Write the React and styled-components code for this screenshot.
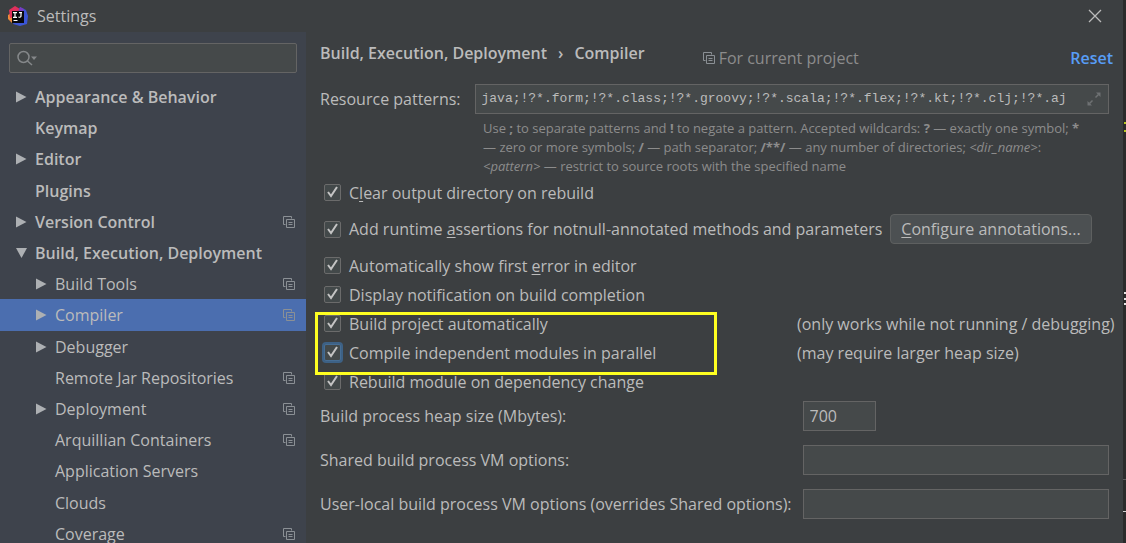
import React from 'react';
import styled, { createGlobalStyle, css } from 'styled-components';

const Global = createGlobalStyle`
  *, *::before, *::after { box-sizing: border-box; }
  html, body, #root { height: 100%; }
  body {
    margin: 0;
    overflow: hidden;
    background: #3c3f41;
    color: #bbbbbb;
    font: 16px/20px "Open Sans", "Noto Sans", sans-serif;
  }
  input, button { font: inherit; color: inherit; }
  u { text-underline-offset: 2px; }
`;

const Screen = styled.div`
  display: flex;
  height: 100%;
`;

const Dialog = styled.div`
  display: flex;
  flex-direction: column;
  flex: 1;
  min-width: 0;
  background: #3c3f41;
`;

const Backdrop = styled.div`
  flex: none;
  width: 3px;
  overflow: hidden;
  background: #2b2b2b;
`;

const TitleBar = styled.header`
  display: flex;
  align-items: center;
  gap: 9px;
  flex: none;
  height: 32px;
  padding: 0 21px 0 8px;
`;

const Title = styled.h1`
  flex: 1;
  margin: 0;
  font-size: 16px;
  font-weight: 400;
`;

const IconButton = styled.button`
  display: flex;
  padding: 0;
  border: 0;
  background: none;
`;

const Body = styled.div`
  display: flex;
  flex: 1;
  min-height: 0;
`;

const Sidebar = styled.nav`
  flex: none;
  width: 306px;
  padding-top: 11px;
  overflow: hidden;
  background: #3e434c;
`;

const SearchBox = styled.label`
  display: flex;
  align-items: center;
  height: 30px;
  margin: 0 9px 8px 9px;
  padding-left: 6px;
  border: 1px solid #646464;
  border-radius: 2px;
  background: #45494a;
`;

const SearchInput = styled.input`
  flex: 1;
  min-width: 0;
  border: 0;
  outline: 0;
  background: transparent;
`;

const Tree = styled.ul`
  display: grid;
  grid-auto-rows: 31px 31px 32px 31px 31px;
  margin: 0;
  padding: 0;
  list-style: none;
`;

const TreeRow = styled.li`
  display: flex;
  align-items: center;
  padding: 0 11px 0 ${(p) => (p.$level ? '35px' : '15px')};
  background: ${(p) => (p.$selected ? '#4b6eaf' : 'transparent')};
  font-weight: ${(p) => (p.$level ? 400 : 600)};
`;

const Arrow = styled.span`
  display: flex;
  flex: none;
  width: 20px;
`;

const TreeLabel = styled.a`
  flex: 1;
  color: inherit;
  text-decoration: none;
  white-space: nowrap;
`;

const Content = styled.main`
  flex: 1;
  min-width: 0;
  padding: 11px 14px 0 14px;
`;

const Header = styled.div`
  display: flex;
  align-items: flex-start;
  height: 41px;
  margin-right: -4px;
  white-space: nowrap;
`;

const Crumbs = styled.h2`
  display: flex;
  gap: 11px;
  margin: 0 58px 0 0;
  font-size: 16px;
  line-height: 20px;
  font-weight: 600;
`;

const Scope = styled.span`
  display: flex;
  align-items: center;
  gap: 4px;
  flex: 1;
  margin-top: 5px;
  color: #8c8c8c;
`;

const Reset = styled.a`
  margin-top: 5px;
  color: #589df6;
  font-weight: 600;
  text-decoration: none;
`;

const PatternRow = styled.div`
  display: flex;
  align-items: center;
  gap: 14px;
`;

const fieldBox = css`
  height: 30px;
  border: 1px solid #646464;
  background: #45494a;
`;

const PatternField = styled.div`
  ${fieldBox}
  display: flex;
  align-items: center;
  flex: 1;
  min-width: 0;
  padding: 0 6px;
`;

const PatternInput = styled.input`
  flex: 1;
  min-width: 0;
  padding: 0;
  border: 0;
  outline: 0;
  background: transparent;
  font: 13px/20px "Liberation Mono", monospace;
`;

const Hint = styled.p`
  margin: 5px 0 2px 163px;
  color: #8c8c8c;
  font-size: 13px;
  line-height: 19px;
  white-space: nowrap;
`;

const Options = styled.div`
  display: flex;
  flex-direction: column;
`;

const OptionRow = styled.div`
  display: flex;
  align-items: center;
  height: ${(p) => (p.$tall ? '44px' : '29px')};
  white-space: nowrap;
`;

const OptionLabel = styled.label`
  display: flex;
  align-items: center;
  gap: 8px;
  padding-left: 4px;
`;

const CheckHolder = styled.span`
  display: grid;
  & > * { grid-area: 1 / 1; }
  & > svg { pointer-events: none; visibility: hidden; }
  & > input:checked + svg { visibility: visible; }
`;

const Check = styled.input`
  appearance: none;
  width: 17px;
  height: 17px;
  margin: 0;
  border: 1px solid ${(p) => (p.$focused ? '#466d94' : '#6b6b6b')};
  border-radius: 2px;
  outline: 0;
  background: #43494a;
  box-shadow: ${(p) => (p.$focused ? '0 0 0 2px #3d6185' : 'none')};
`;

const Note = styled.span`
  flex: none;
  width: 312px;
  margin-left: auto;
`;

const Marked = styled.div`
  position: relative;
  &::after {
    content: '';
    position: absolute;
    inset: 3px auto -8px -5px;
    width: 402px;
    border: 3px solid #ffff21;
    pointer-events: none;
  }
`;

const Button = styled.button`
  height: 30px;
  margin-left: 8px;
  padding: 0 10px;
  border: 1px solid #5e6060;
  border-radius: 4px;
  background: #4c5052;
`;

const Fields = styled.div`
  display: grid;
  grid-template-columns: auto minmax(0, 1fr);
  column-gap: 11px;
  row-gap: 14px;
  align-items: center;
  margin-top: 5px;
  white-space: nowrap;
`;

const Field = styled.input`
  ${fieldBox}
  width: ${(p) => (p.$short ? '73px' : '100%')};
  padding: 0 6px;
  border-radius: 0;
  outline: 0;
`;

const Logo = () => (
  <svg width="20" height="20" viewBox="0 0 20 20" aria-hidden="true">
    <path d="M0 9l5-3 3 10-4 1-4-4z" fill="#f08a3a" />
    <path d="M1 4l6-4 5 3-2 8-8 1z" fill="#e0305c" />
    <path d="M12 1l6 3 2 6-1 8-7 2-7-2 3-6z" fill="#3b55d6" />
    <path d="M12 1l4 2-2 4-4-1z" fill="#7a3bc0" />
    <path d="M4 5h12v12H4z" fill="#08080c" />
    <path d="M5 6.600h4M7 7v4M5 11.400h4M11 6.600h3M13 7v3q0 1.400-2.500 1.200M5.500 14.500h4" fill="none" stroke="#fff" strokeWidth="1.200" />
  </svg>
);

const CopyIcon = () => (
  <svg width="12" height="12" viewBox="0 0 12 12" fill="none" stroke="#8b9095" aria-hidden="true">
    <path d="M2.500 8.500h-2v-8h8v2" />
    <path d="M3.500 3.500h8v8h-8zM5.500 6.500h4M5.500 8.500h4" />
  </svg>
);

const Triangle = ({ open }) => (
  <svg width="12" height="12" viewBox="0 0 12 12" fill="#adb0b3" aria-hidden="true">
    <path d={open ? 'M1 1h11L6.500 11z' : 'M1 0.500v11L11.500 6z'} />
  </svg>
);

const EditorEdge = () => (
  <svg width="3" height="543" viewBox="0 0 3 543" aria-hidden="true">
    <path d="M1 122h2v2H1zM1 130h2v2H1z" fill="#b5c522" />
    <path d="M1 292h2v2H1zM1 298h2v2H1zM1 303h2v2H1z" fill="#e4e4e4" />
    <path d="M0 479h3v1H0z" fill="#5c5c5c" />
    <path d="M0 511h3v1H0z" fill="#d0d0d0" />
  </svg>
);

const tree = [
  ['Appearance & Behavior', 0, 'closed'],
  ['Keymap', 0],
  ['Editor', 0, 'closed'],
  ['Plugins', 0],
  ['Version Control', 0, 'closed', true],
  ['Build, Execution, Deployment', 0, 'open'],
  ['Build Tools', 1, 'closed', true],
  ['Compiler', 1, 'closed', true],
  ['Debugger', 1, 'closed'],
  ['Remote Jar Repositories', 1, null, true],
  ['Deployment', 1, 'closed', true],
  ['Arquillian Containers', 1, null, true],
  ['Application Servers', 1],
  ['Clouds', 1],
  ['Coverage', 1, null, true],
];

const Option = ({ children, focused, tall, note, action }) => (
  <OptionRow $tall={tall}>
    <OptionLabel>
      <CheckHolder>
        <Check type="checkbox" defaultChecked $focused={focused} />
        <svg width="17" height="17" viewBox="0 0 17 17" fill="none" stroke="#c4c4c4" strokeWidth="2" aria-hidden="true">
          <path d="M4 8l3 4 6-9" />
        </svg>
      </CheckHolder>
      <span>{children}</span>
    </OptionLabel>
    {action}
    {note && <Note>{note}</Note>}
  </OptionRow>
);

export default function App() {
  return (
    <Screen>
      <Global />
      <Dialog>
        <TitleBar>
          <Logo />
          <Title>Settings</Title>
          <IconButton type="button" aria-label="Close">
            <svg width="14" height="14" viewBox="0 0 14 14" stroke="#bbb" strokeWidth="1.300" aria-hidden="true">
              <path d="M1 1l12 12M13 1L1 13" />
            </svg>
          </IconButton>
        </TitleBar>
        <Body>
          <Sidebar>
            <SearchBox>
              <svg width="22" height="18" viewBox="0 0 22 18" fill="none" stroke="#85888a" strokeWidth="1.500" aria-hidden="true">
                <circle cx="7.500" cy="8" r="5.500" />
                <path d="M11.500 12l4.500 4" />
                <path d="M15 7.500h6l-3 3.500z" fill="#85888a" stroke="none" />
              </svg>
              <SearchInput type="text" aria-label="Search settings" />
            </SearchBox>
            <Tree>
              {tree.map(([name, level, arrow, copy]) => (
                <TreeRow key={name} $level={level} $selected={name === 'Compiler'}>
                  <Arrow>{arrow && <Triangle open={arrow === 'open'} />}</Arrow>
                  <TreeLabel href="#">{name}</TreeLabel>
                  {copy && <CopyIcon />}
                </TreeRow>
              ))}
            </Tree>
          </Sidebar>
          <Content>
            <Header>
              <Crumbs>
                <span>Build, Execution, Deployment</span>
                <span>›</span>
                <span>Compiler</span>
              </Crumbs>
              <Scope>
                <CopyIcon />
                For current project
              </Scope>
              <Reset href="#">Reset</Reset>
            </Header>
            <PatternRow>
              <label htmlFor="patterns">Resource patterns:</label>
              <PatternField>
                <PatternInput
                  id="patterns"
                  type="text"
                  defaultValue="java;!?*.form;!?*.class;!?*.groovy;!?*.scala;!?*.flex;!?*.kt;!?*.clj;!?*.aj"
                />
                <svg width="16" height="16" viewBox="0 0 16 16" fill="#6e7173" stroke="#6e7173" aria-hidden="true">
                  <path d="M9.500 6.500l3-3M6.500 9.500l-3 3" strokeWidth="1.500" />
                  <path d="M10 1.500h4.500V6zM1.500 10v4.500H6z" stroke="none" />
                </svg>
              </PatternField>
            </PatternRow>
            <Hint>
              Use <b>;</b> to separate patterns and <b>!</b> to negate a pattern. Accepted wildcards: <b>?</b> — exactly one symbol; <b>*</b>
              <br />
              — zero or more symbols; <b>/</b> — path separator; <b>/**/</b> — any number of directories; <i>&lt;dir_name&gt;</i>:
              <br />
              <i>&lt;pattern&gt;</i> — restrict to source roots with the specified name
            </Hint>
            <Options>
              <Option>C<u>l</u>ear output directory on rebuild</Option>
              <Option tall action={<Button type="button"><u>C</u>onfigure annotations...</Button>}>
                Add runtime <u>a</u>ssertions for notnull-annotated methods and parameters
              </Option>
              <Option>Automatically show first <u>e</u>rror in editor</Option>
              <Option>Display notification on build completion</Option>
              <Marked>
                <Option note="(only works while not running / debugging)">Build project automatically</Option>
                <Option focused note="(may require larger heap size)">Compile independent modules in parallel</Option>
              </Marked>
              <Option>Rebuild module on dependency change</Option>
            </Options>
            <Fields>
              <label htmlFor="heap">Build process heap size (Mbytes):</label>
              <Field id="heap" type="text" defaultValue="700" $short />
              <label htmlFor="shared">Shared build process VM options:</label>
              <Field id="shared" type="text" />
              <label htmlFor="local">User-local build process VM options (overrides Shared options):</label>
              <Field id="local" type="text" />
            </Fields>
          </Content>
        </Body>
      </Dialog>
      <Backdrop>
        <EditorEdge />
      </Backdrop>
    </Screen>
  );
}
